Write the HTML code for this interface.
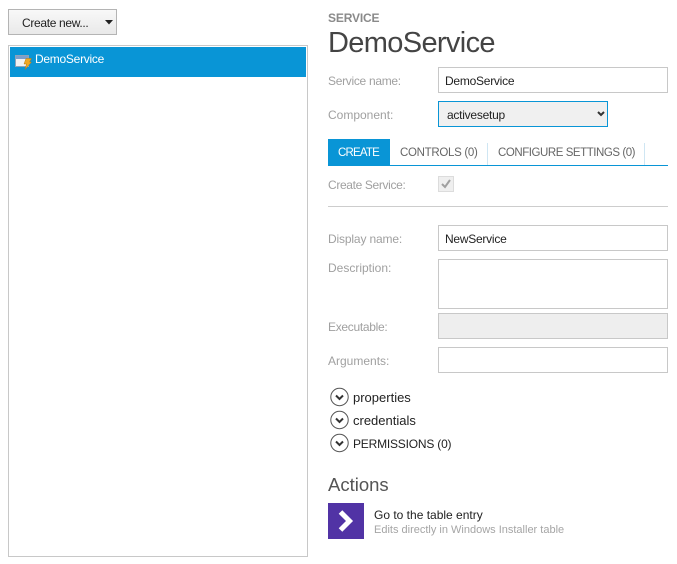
<!DOCTYPE html>
<html>
<head>
<meta charset="utf-8">
<style>
html,body{margin:0;padding:0;background:#fff;}
body{width:677px;height:564px;position:relative;overflow:hidden;font-family:"Liberation Sans",sans-serif;font-size:12px;color:#222;}
.a{position:absolute;white-space:nowrap;}
.lbl{color:#a0a0a0;font-size:12px;line-height:16px;left:328px;}
.box{position:absolute;box-sizing:border-box;border:1px solid #c8c8c8;background:#fff;left:438px;width:230px;}
.val{color:#222;font-size:12px;line-height:16px;letter-spacing:-.25px;}
.exp{font-size:13px;line-height:16px;color:#222;left:353px;}
.tab{font-size:11.500px;line-height:16px;top:145px;color:#666;}
</style>
</head>
<body>
<div class="a" style="left:8px;top:9px;width:109px;height:26px;box-sizing:border-box;border:1px solid #b4b4b4;background:linear-gradient(#f8f8f8,#e9e9e9);"></div>
<div class="a" style="left:22px;top:15px;line-height:16px;color:#222;letter-spacing:-.33px;">Create new...</div>
<svg class="a" style="left:105px;top:20px" width="8" height="5"><path d="M0 0H8L4 4.500Z" fill="#222"/></svg>

<div class="a" style="left:8px;top:45px;width:300px;height:512px;box-sizing:border-box;border:1px solid #c8c8c8;"></div>
<div class="a" style="left:10px;top:47px;width:296px;height:30px;background:#0995d6;"></div>
<svg class="a" style="left:15px;top:54px" width="17" height="16">
<rect x="0.500" y="1.500" width="13" height="11" fill="#f2f2f2" stroke="#8fa3b8"/>
<rect x="1" y="2" width="12" height="3" fill="#7d9fcc"/>
<path d="M11 4.500H16.500L14.500 8H16.500L10 15.500L11.500 10H9Z" fill="#f0a823" stroke="#b97a12" stroke-width=".5"/>
</svg>
<div class="a" style="left:35px;top:51px;line-height:16px;color:#fff;letter-spacing:-.27px;">DemoService</div>

<div class="a" style="left:328px;top:10px;font-weight:bold;line-height:16px;color:#8a8a8a;letter-spacing:-.15px;">SERVICE</div>
<div class="a" style="left:328px;top:25px;font-size:29px;line-height:36px;color:#444;letter-spacing:-.65px;">DemoService</div>

<div class="a lbl" style="top:73px;letter-spacing:-.3px;">Service name:</div>
<div class="box" style="top:67px;height:26px;"></div>
<div class="a val" style="left:445px;top:73px;">DemoService</div>

<div class="a lbl" style="top:107px;">Component:</div>
<div class="box" style="top:101px;height:26px;width:170px;border-color:#0995d6;background:#f0f0f0;"></div>
<div class="a val" style="left:447px;top:107px;">activesetup</div>
<svg class="a" style="left:597px;top:111px" width="8" height="6"><path d="M1 1L4 4L7 1" fill="none" stroke="#333" stroke-width="2"/></svg>

<div class="a" style="left:328px;top:139px;width:62px;height:26px;background:#0995d6;"></div>
<div class="a tab" style="left:338px;color:#fff;letter-spacing:-.8px;">CREATE</div>
<div class="a tab" style="left:400px;letter-spacing:-.3px;">CONTROLS (0)</div>
<div class="a tab" style="left:498px;letter-spacing:-.45px;">CONFIGURE SETTINGS (0)</div>
<div class="a" style="left:487px;top:143px;width:1px;height:22px;background:#cfe6f3;"></div>
<div class="a" style="left:644px;top:143px;width:1px;height:22px;background:#cfe6f3;"></div>
<div class="a" style="left:328px;top:165px;width:340px;height:1px;background:#0995d6;"></div>

<div class="a lbl" style="top:177px;letter-spacing:-.35px;">Create Service:</div>
<div class="a" style="left:438px;top:176px;width:16px;height:16px;box-sizing:border-box;border:1px solid #dcdcdc;background:#efefef;"></div>
<svg class="a" style="left:438px;top:176px" width="16" height="16"><path d="M4 8L7 11L12 4" fill="none" stroke="#a0a0a0" stroke-width="2"/></svg>
<div class="a" style="left:328px;top:206px;width:340px;height:1px;background:#cdcdcd;"></div>

<div class="a lbl" style="top:231px;letter-spacing:-.15px;">Display name:</div>
<div class="box" style="top:225px;height:26px;"></div>
<div class="a val" style="left:445px;top:231px;">NewService</div>

<div class="a lbl" style="top:260px;">Description:</div>
<div class="box" style="top:259px;height:50px;"></div>

<div class="a lbl" style="top:319px;letter-spacing:-.3px;">Executable:</div>
<div class="box" style="top:313px;height:26px;background:#eee;"></div>

<div class="a lbl" style="top:353px;">Arguments:</div>
<div class="box" style="top:347px;height:26px;"></div>

<svg class="a" style="left:330px;top:387px" width="20" height="66">
<g fill="none">
<circle cx="9.500" cy="10" r="8.700" stroke="#555" stroke-width="1"/>
<circle cx="9.500" cy="33" r="8.700" stroke="#555" stroke-width="1"/>
<circle cx="9.500" cy="56" r="8.700" stroke="#555" stroke-width="1"/>
<path d="M6 8.500L9.500 12L13 8.500M6 31.500L9.500 35L13 31.500M6 54.500L9.500 58L13 54.500" stroke="#333" stroke-width="2"/>
</g>
</svg>
<div class="a exp" style="top:390px;">properties</div>
<div class="a exp" style="top:413px;">credentials</div>
<div class="a exp" style="top:436px;font-size:12px;letter-spacing:-.2px;">PERMISSIONS (0)</div>

<div class="a" style="left:328px;top:472px;font-size:18.500px;line-height:26px;color:#555;">Actions</div>
<div class="a" style="left:328px;top:503px;width:36px;height:36px;background:#5133a5;"></div>
<svg class="a" style="left:328px;top:503px" width="36" height="36"><path d="M12.500 9L21.500 18L12.500 27" fill="none" stroke="#fff" stroke-width="5" stroke-linejoin="miter"/></svg>
<div class="a" style="left:374px;top:507px;line-height:16px;color:#222;">Go to the table entry</div>
<div class="a" style="left:374px;top:522px;font-size:11px;line-height:16px;color:#a5a5a5;">Edits directly in Windows Installer table</div>
</body>
</html>
